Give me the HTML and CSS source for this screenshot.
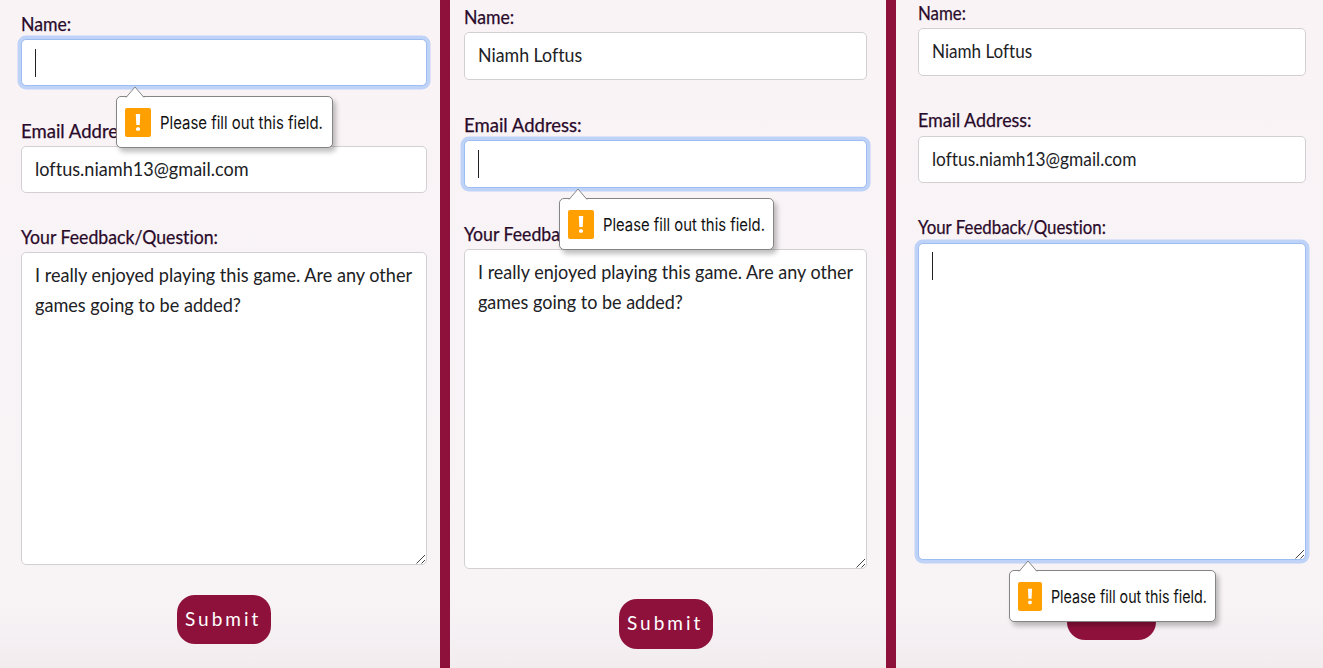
FILE: index.html
```
<!DOCTYPE html>
<html lang="en">
<head>
<meta charset="utf-8">
<title>Feedback form validation</title>
<link rel="stylesheet" href="styles.css">
</head>
<body>
<main class="board">
  <section class="panel panel-one">
    <div class="field">
      <div class="label"><span class="t">Name:</span></div>
      <div class="input focus"><i class="caret"></i></div>
      <div class="tip">
        <svg class="tip-arrow" viewBox="0 0 20 12"><path d="M1 11.5 10 1l9 10.5" fill="#fff" stroke="#858585"/></svg>
        <div class="warn"><svg viewBox="0 0 26 29"><path d="M10.800 6h4.400l-.5 11h-3.400z" fill="#fff"/><rect x="11" y="19.200" width="4" height="3.600" rx="1.500" fill="#fff"/></svg></div>
        <span class="t tip-text">Please fill out this field.</span>
      </div>
    </div>
    <div class="field">
      <div class="label email-label"><span class="t">Email Address:</span></div>
      <div class="input"><span class="t">loftus.niamh13@gmail.com</span></div>
    </div>
    <div class="field last">
      <div class="label"><span class="t">Your Feedback/Question:</span></div>
      <div class="input area"><span class="t">I really enjoyed playing this game. Are any other<br>games going to be added?</span>
        <svg class="grip" viewBox="0 0 10 10"><path d="M.5 9.500 9 1M5.500 9.500 9 6" stroke="#444" fill="none"/></svg></div>
    </div>
    <div class="submit"><span>Submit</span></div>
  </section>

  <section class="panel panel-two">
    <div class="field">
      <div class="label"><span class="t">Name:</span></div>
      <div class="input name"><span class="t">Niamh Loftus</span></div>
    </div>
    <div class="field">
      <div class="label email-label"><span class="t">Email Address:</span></div>
      <div class="input focus"><i class="caret"></i></div>
      <div class="tip">
        <svg class="tip-arrow" viewBox="0 0 20 12"><path d="M1 11.5 10 1l9 10.5" fill="#fff" stroke="#858585"/></svg>
        <div class="warn"><svg viewBox="0 0 26 29"><path d="M10.800 6h4.400l-.5 11h-3.400z" fill="#fff"/><rect x="11" y="19.200" width="4" height="3.600" rx="1.500" fill="#fff"/></svg></div>
        <span class="t tip-text">Please fill out this field.</span>
      </div>
    </div>
    <div class="field last">
      <div class="label"><span class="t">Your Feedback/Question:</span></div>
      <div class="input area"><span class="t">I really enjoyed playing this game. Are any other<br>games going to be added?</span>
        <svg class="grip" viewBox="0 0 10 10"><path d="M.5 9.500 9 1M5.500 9.500 9 6" stroke="#444" fill="none"/></svg></div>
    </div>
    <div class="submit"><span>Submit</span></div>
  </section>

  <section class="panel panel-three">
    <div class="field">
      <div class="label"><span class="t">Name:</span></div>
      <div class="input name"><span class="t">Niamh Loftus</span></div>
    </div>
    <div class="field">
      <div class="label email-label"><span class="t">Email Address:</span></div>
      <div class="input"><span class="t">loftus.niamh13@gmail.com</span></div>
    </div>
    <div class="field last">
      <div class="label"><span class="t">Your Feedback/Question:</span></div>
      <div class="input area focus"><i class="caret"></i>
        <svg class="grip" viewBox="0 0 10 10"><path d="M.5 9.500 9 1M5.500 9.500 9 6" stroke="#444" fill="none"/></svg></div>
      <div class="tip">
        <svg class="tip-arrow" viewBox="0 0 20 12"><path d="M1 11.5 10 1l9 10.5" fill="#fff" stroke="#858585"/></svg>
        <div class="warn"><svg viewBox="0 0 26 29"><path d="M10.800 6h4.400l-.5 11h-3.400z" fill="#fff"/><rect x="11" y="19.200" width="4" height="3.600" rx="1.500" fill="#fff"/></svg></div>
        <span class="t tip-text">Please fill out this field.</span>
      </div>
    </div>
    <div class="submit"></div>
  </section>
</main>
</body>
</html>
```
FILE: styles.css
```
* { box-sizing: border-box; }
body { margin: 0; font-family: Lato, "Noto Sans", sans-serif; font-variant-ligatures: none; }
.board {
  display: grid;
  grid-template-columns: 440px 436px 427px;
  column-gap: 10px;
  height: 668px;
  overflow: hidden;
  background: #8e113c;
}
.panel {
  display: flex;
  flex-direction: column;
  background: linear-gradient(#f9f3f6 0, #f8f4f6 600px, #f2ecef 668px);
}
.panel-one { --sx: .952; --lx: .93; --ex: .975; --tx: .853; --h: 47px; --area: 313px; --gap: 29.500px; padding: 9px 13px 0 21px; }
.panel-two { --sx: .947; --lx: .93; --ex: .975; --tx: .848; --h: 48px; --area: 320px; --gap: 30.300px; padding: 2px 19px 0 14px; }
.panel-three { --sx: .911; --lx: .887; --ex: .94; --tx: .816; --h: 47.500px; --area: 317px; --gap: 30px; padding: 0 17px 0 22px; }
.field { position: relative; margin-bottom: var(--gap); }
.field.last { margin-bottom: 30px; }
.t { display: inline-block; white-space: nowrap; transform: scaleX(var(--sx)); transform-origin: 0 50%; }
.name .t { transform: scaleX(calc(var(--sx) - .012)); }
.label { height: 30px; font-size: 19px; line-height: 30px; color: #2a0a2a; -webkit-text-stroke: .25px #2a0a2a; }
.label .t { transform: scaleX(var(--lx)); }
.email-label .t { transform: scaleX(var(--ex)); }
.panel-three .label { line-height: 28px; }
.panel-three .field:first-child .label { height: 28px; line-height: 26px; }
.input {
  position: relative;
  height: var(--h);
  padding: 0 13px;
  border: 1px solid #d3d0d3;
  border-radius: 5px;
  background: #fff;
  color: #202124;
  font-size: 19px;
  line-height: 44px;
}
.area { height: var(--area); padding-top: 7px; line-height: 30px; }
.focus { border-color: #9dbdf0; box-shadow: 0 0 0 3.500px #bfd2f7; }
.caret { display: block; width: 1px; height: 28px; margin-top: 9px; background: #222; }
.area .caret { margin-top: 1px; }
.grip { position: absolute; right: 0; bottom: 0; width: 10px; height: 10px; }
.tip {
  position: absolute;
  z-index: 2;
  display: flex;
  align-items: center;
  left: 95px;
  top: calc(100% + 10px);
  width: 217px;
  height: 52px;
  padding-left: 8px;
  gap: 9px;
  border: 1px solid #858585;
  border-radius: 5px;
  background: #fff;
  box-shadow: 3px 4px 5px rgba(0, 0, 0, .25);
}
.panel-two .tip { width: 215px; }
.panel-three .tip { left: 91px; width: 207px; }
.tip-arrow { position: absolute; left: 8px; top: -11px; width: 20px; height: 12px; }
.warn { width: 26px; height: 29px; flex: none; border-radius: 2px; background: #ffa000; }
.panel-three .warn { width: 24px; }
.warn svg { display: block; width: 100%; height: 100%; }
.tip-text { font-family: Inter, sans-serif; font-size: 17.500px; color: #111; transform: scaleX(var(--tx)); }
.submit {
  width: 94px;
  height: 49px;
  margin-left: 156px;
  padding-left: 8px;
  border-radius: 18px;
  background: #8e113c;
  color: #fff;
  font-size: 19px;
  line-height: 48px;
  letter-spacing: 3px;
}
.panel-two .submit { margin-left: 155px; height: 50px; }
.panel-three .submit { margin-left: 149px; width: 89px; height: 50px; }
```
